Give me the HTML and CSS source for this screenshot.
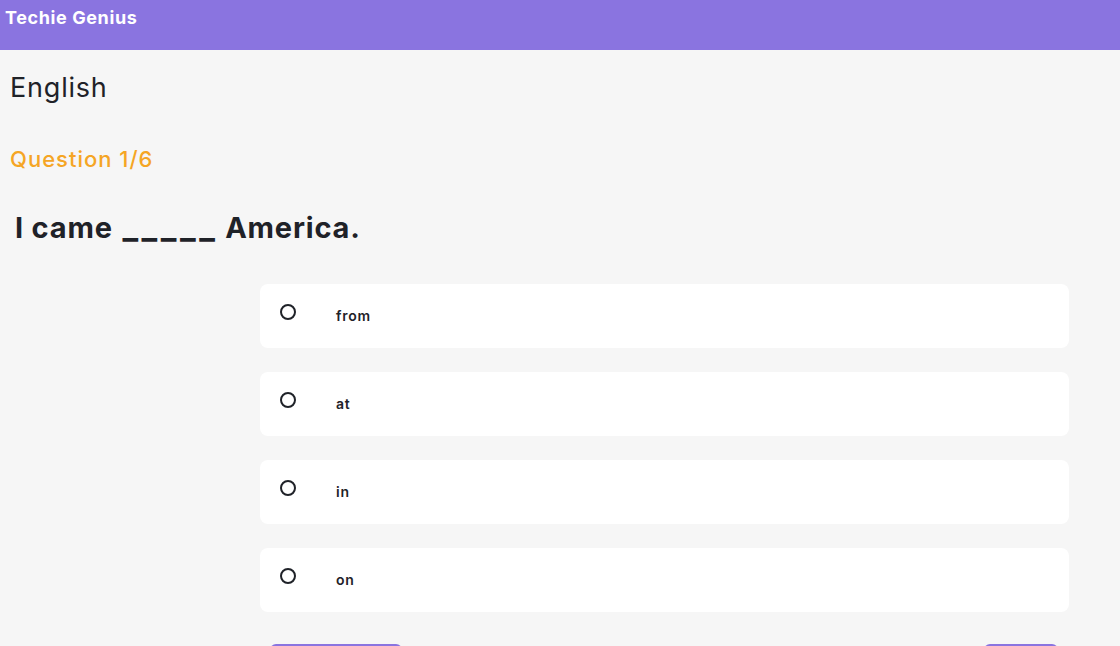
FILE: index.html
```html
<!DOCTYPE html>
<html lang="en">
<head>
<meta charset="utf-8">
<title>Techie Genius</title>
<link rel="stylesheet" href="styles.css">
</head>
<body>
<header class="topbar">
  <span class="brand">Techie Genius</span>
</header>
<main class="content">
  <h1 class="subject">English</h1>
  <h2 class="counter">Question 1/6</h2>
  <h3 class="question">I came <span class="blank">_____</span> America.</h3>
  <div class="options">
    <label class="option"><span class="radio"></span><span class="opt-text">from</span></label>
    <label class="option"><span class="radio"></span><span class="opt-text">at</span></label>
    <label class="option"><span class="radio"></span><span class="opt-text">in</span></label>
    <label class="option"><span class="radio"></span><span class="opt-text">on</span></label>
  </div>
  <div class="nav">
    <button class="btn btn-prev">Previous</button>
    <button class="btn btn-next">Next</button>
  </div>
</main>
</body>
</html>
```

FILE: styles.css
```css
* { box-sizing: border-box; }
html, body { margin: 0; padding: 0; }
body {
  background: #f6f6f6;
  font-family: "Inter", "Noto Sans", sans-serif;
  color: #1f2228;
  height: 646px;
  overflow: hidden;
}
.topbar {
  height: 50px;
  background: #8a74e0;
  padding: 7px 5px 0;
}
.brand {
  color: #ffffff;
  font-weight: 700;
  font-size: 18px;
  letter-spacing: 0.6px;
}
.content {
  padding: 0 10px;
  display: flex;
  flex-direction: column;
}
.subject {
  margin: 22px 0 0;
  font-size: 27px;
  font-weight: 400;
  line-height: 32px;
  letter-spacing: 0.8px;
}
.counter {
  margin: 41px 0 0;
  font-size: 22px;
  font-weight: 500;
  line-height: 28px;
  color: #f5a524;
  letter-spacing: 1px;
}
.question {
  margin: 37px 0 0 5px;
  font-size: 29px;
  font-weight: 700;
  line-height: 36px;
  letter-spacing: 0.8px;
}
.blank {
  font-size: 33px;
  line-height: 30px;
  letter-spacing: 3.5px;
  margin: 0 -1px 0 2px;
}
.options {
  margin: 38px 0 0 250px;
  width: 809px;
  display: flex;
  flex-direction: column;
  gap: 24px;
}
.option {
  height: 64px;
  background: #ffffff;
  border-radius: 8px;
  display: flex;
  align-items: flex-start;
  padding: 20px 0 0 20px;
}
.radio {
  width: 16px;
  height: 16px;
  border: 2px solid #1f2228;
  border-radius: 50%;
}
.opt-text {
  margin: 1px 0 0 40px;
  font-size: 14px;
  font-weight: 600;
  line-height: 22px;
  letter-spacing: 0.8px;
}
.nav {
  margin: 32px 0 0 250px;
  width: 809px;
  display: flex;
  justify-content: space-between;
  padding: 0 11px 0 10px;
}
.btn {
  border: none;
  background: #8a74e0;
  color: #fff;
  border-radius: 6px;
  height: 40px;
  font-family: inherit;
  font-size: 16px;
}
.btn-prev { width: 132px; }
.btn-next { width: 74px; }
```
